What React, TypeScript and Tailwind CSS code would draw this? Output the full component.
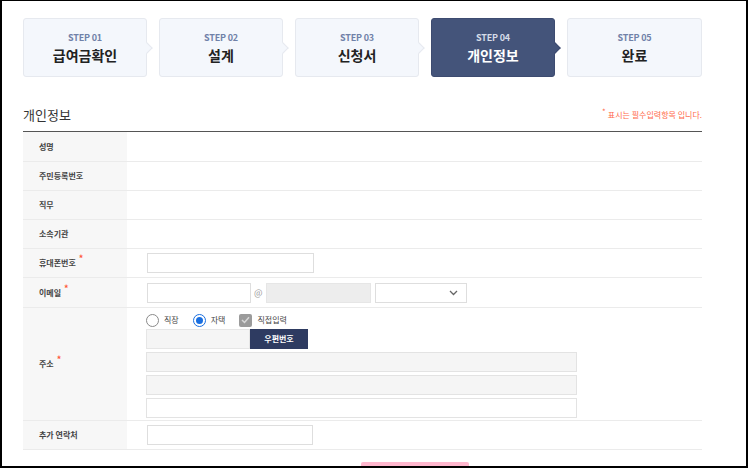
import React from 'react';

const FONT = { fontFamily: '"Noto Sans CJK KR", "Noto Sans", sans-serif' };

const steps = [
  { no: 'STEP 01', title: '급여금확인' },
  { no: 'STEP 02', title: '설계' },
  { no: 'STEP 03', title: '신청서' },
  { no: 'STEP 04', title: '개인정보', active: true },
  { no: 'STEP 05', title: '완료' },
];

function Step({ no, title, active, last }: { no: string; title: string; active?: boolean; last?: boolean }) {
  const box = active
    ? 'bg-[#44547a] border-[#3d4b70]'
    : 'bg-[#f4f7fc] border-[#e6e9ef]';
  return (
    <div className={last ? 'flex-1' : 'w-[136px] shrink-0 pr-[12px]'}>
      <div className={`relative flex h-[59px] flex-col items-center justify-center rounded-[3px] border ${box}`}>
        <span className={`text-[9px] font-semibold leading-[12px] tracking-[-0.2px] ${active ? 'text-[#d5dbe8]' : 'text-[#7081a8]'}`}>
          {no}
        </span>
        <span className={`mt-[2px] text-[14px] font-bold leading-[18px] ${active ? 'text-white' : 'text-[#222]'}`}>
          {title}
        </span>
        {!last && (
          <span
            className={`absolute right-[-5px] top-1/2 h-[8px] w-[8px] -translate-y-1/2 rotate-45 border-r border-t ${box}`}
          />
        )}
      </div>
    </div>
  );
}

function Req() {
  return <span className="relative -top-[4px] ml-[3px] text-[9px] text-[#ff5a3a]">*</span>;
}

function Row({ label, req, children, h = 'h-[29px]' }: { label: string; req?: boolean; children?: React.ReactNode; h?: string }) {
  return (
    <div className={`flex border-b border-[#ebebeb] ${h}`}>
      <div className="flex w-[104px] shrink-0 items-center bg-[#f7f7f7] pl-[16px] text-[8px] font-bold text-[#444]">
        {label}
        {req && <Req />}
      </div>
      <div className="flex flex-1 items-center pl-[20px]">{children}</div>
    </div>
  );
}

const inputCls = 'h-[20px] border border-[#dedede] bg-white';

export default function App() {
  return (
    <div className="h-[469px] w-[749px] bg-white" style={FONT}>
      <div className="box-border h-[468px] w-[748px] overflow-hidden border-b-2 border-l-2 border-r-2 border-t border-black pl-[21px] pr-[44px] pt-[17px]">
        <div className="flex">
          {steps.map((s, i) => (
            <Step key={s.no} {...s} last={i === steps.length - 1} />
          ))}
        </div>

        <div className="mt-[29px] flex items-center justify-between pb-[7px]">
          <h2 className="text-[13px] leading-[18px] text-[#333]">개인정보</h2>
          <p className="text-[8px] text-[#ff6a4a]">
            <span className="relative -top-[3px] mr-[2px]">*</span>표시는 필수입력항목 입니다.
          </p>
        </div>

        <div className="border-t-[1.5px] border-[#555]">
          <Row label="성명" h="h-[30px]" />
          <Row label="주민등록번호" />
          <Row label="직무" />
          <Row label="소속기관" />
          <Row label="휴대폰번호" req>
            <div className={`${inputCls} w-[167px]`} />
          </Row>
          <Row label="이메일" req h="h-[30px]">
            <div className={`${inputCls} w-[104px]`} />
            <span className="mx-[3px] text-[9px] text-[#999]">@</span>
            <div className="h-[20px] w-[105px] border border-[#e6e6e6] bg-[#ededed]" />
            <div className={`${inputCls} ml-[4px] flex w-[92px] items-center justify-end pr-[8px]`}>
              <svg width="9" height="6" viewBox="0 0 9 6" fill="none">
                <path d="M1 1l3.5 3.5L8 1" stroke="#666" strokeWidth="1.3" />
              </svg>
            </div>
          </Row>
          <div className="flex h-[113px] border-b border-[#ebebeb]">
            <div className="flex w-[104px] shrink-0 items-center bg-[#f7f7f7] pl-[16px] text-[8px] font-bold text-[#444]">
              주소
              <Req />
            </div>
            <div className="flex flex-1 flex-col pl-[19px] pt-[5px]">
              <div className="flex h-[14px] items-center text-[8px] text-[#444]">
                <span className="h-[13px] w-[13px] rounded-full border border-[#8a8a8a] bg-white" />
                <span className="ml-[5px]">직장</span>
                <span className="ml-[14px] flex h-[13px] w-[13px] items-center justify-center rounded-full border-[1.5px] border-[#1a6fe0] bg-white">
                  <span className="h-[7px] w-[7px] rounded-full bg-[#1a6fe0]" />
                </span>
                <span className="ml-[5px]">자택</span>
                <span className="ml-[14px] flex h-[13px] w-[13px] items-center justify-center rounded-[2px] bg-[#9b9b9b]">
                  <svg width="9" height="8" viewBox="0 0 9 8" fill="none">
                    <path d="M1 4l2.5 2.5L8 1.2" stroke="#d8d8d8" strokeWidth="1.5" />
                  </svg>
                </span>
                <span className="ml-[5px]">직접입력</span>
              </div>
              <div className="mt-[2px] flex h-[20px]">
                <div className="h-[20px] w-[104px] border border-[#e6e6e6] bg-[#f5f5f5]" />
                <button className="h-[20px] w-[58px] bg-[#2e3b61] text-[8px] font-semibold text-white">우편번호</button>
              </div>
              <div className="mt-[3px] h-[20px] w-[431px] border border-[#e3e3e3] bg-[#f5f5f5]" />
              <div className="mt-[3px] h-[20px] w-[431px] border border-[#e3e3e3] bg-[#f5f5f5]" />
              <div className="mt-[3px] h-[20px] w-[431px] border border-[#e3e3e3] bg-white" />
            </div>
          </div>
          <Row label="추가 연락처">
            <div className={`${inputCls} w-[166px]`} />
          </Row>
        </div>

        <div className="mt-[12px] flex pl-[338px]">
          <div className="h-[20px] w-[108px] rounded-[2px] bg-[#ffb6cd]" />
        </div>
      </div>
    </div>
  );
}
